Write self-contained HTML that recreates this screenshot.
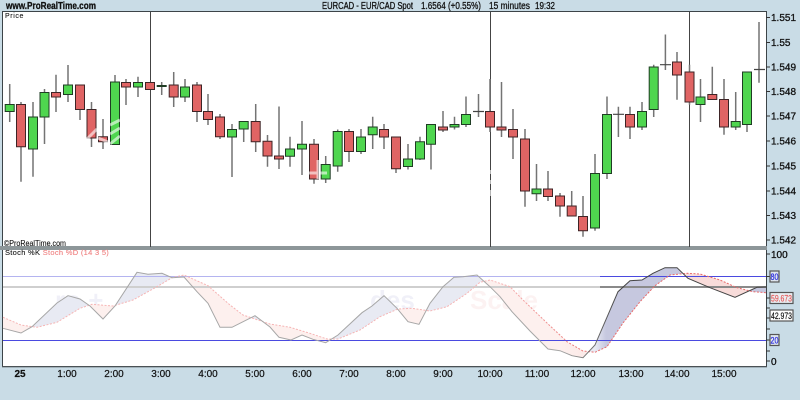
<!DOCTYPE html>
<html>
<head>
<meta charset="utf-8">
<title>EURCAD</title>
<style>
html,body{margin:0;padding:0;background:#c9dce6;overflow:hidden}
svg{display:block;filter:blur(.3px)}
text{font-family:"Liberation Sans",sans-serif;fill:#111;stroke:#111;stroke-width:.3}
.a{font-size:10px;font-weight:bold}
.t{font-size:10px;text-anchor:middle;stroke-width:.2}
</style>
</head>
<body>
<svg width="800" height="400" viewBox="0 0 800 400" xmlns="http://www.w3.org/2000/svg">
<defs>
<linearGradient id="gb" gradientUnits="userSpaceOnUse" x1="595" y1="0" x2="606" y2="0"><stop offset="0" stop-color="#e8eaf3"/><stop offset="1" stop-color="#c6c8df"/></linearGradient>
<linearGradient id="gp" gradientUnits="userSpaceOnUse" x1="560" y1="0" x2="640" y2="0"><stop offset="0" stop-color="#fdf0ee"/><stop offset="1" stop-color="#f8dcda"/></linearGradient>
<linearGradient id="gk" gradientUnits="userSpaceOnUse" x1="560" y1="0" x2="620" y2="0"><stop offset="0" stop-color="#a6a6a6"/><stop offset="1" stop-color="#444"/></linearGradient>
<linearGradient id="gd" gradientUnits="userSpaceOnUse" x1="500" y1="0" x2="600" y2="0"><stop offset="0" stop-color="#f6b4b4"/><stop offset="1" stop-color="#e86a6a"/></linearGradient>
<clipPath id="aboveD"><path d="M3 250V317.3L21 325 37 327.3 57 322.3 80 308.3 92 304.3 113 306 133 300 157 286.7 172 277.7 184 275 208 285.7 230 305 243 315 270 324 290 327.3 310 333.3 327 339 338 339 360 330 380 316.7 398 309 412 308.3 430 311 447 306.7 467 293.3 480 282.3 490 280 510 286.7 523 300 530 306.7 547 323 567 341.7 583 351 595 352.3 607 346.7 623 323 640 301.7 655 285.7 670 275 687 273.3 700 274 720 280 737 287.7 753 291.7 766 292.7V250z"/></clipPath>
<clipPath id="aboveK"><path d="M3 250V328.3L21 333 32 326.7 57 303 68 295.7 80 299 90 306 103 319 115 306 137 272.3 148 274.3 162 273.3 172 277.7 184 277 197 291.7 208 303.3 220 327.3 232 327.3 255 315.7 270 327 279 337.3 291 340 302 335 313 339.3 325.7 342.7 338 335 362 312.7 372 306 384 295.7 397 308.3 408 321.7 419 324.3 430 303.3 443 286.7 454 277.3 463 276.7 477 275 490 286.7 500 296.7 512 311.7 530 331 548 349 560 350.7 572 355.7 583 357.7 595 345 618 291.7 630 280.7 642 280 653 273.3 665 267.7 677 267.7 688 278.3 710 287.7 735 297.3 757 287.3 766 287V250z"/></clipPath>
</defs>

<rect width="800" height="400" fill="#c9dce6"/>
<rect x="2" y="11" width="764.5" height="356" fill="#fff"/>
<path d="M2.5 367V11.5H766.5V367" fill="none" stroke="#3c4448" stroke-width="1"/>
<rect x="0" y="246" width="767" height="4" fill="#8d9699"/>
<rect x="2" y="366" width="765" height="1.3" fill="#4a5155"/>

<!-- vertical separators -->
<path d="M150.5 12V247M490.5 12V247M689.5 12V247" stroke="#444" stroke-width="1" fill="none"/>

<!-- wicks -->
<path d="M9.7 84V122M21 102V181.7M33 102V176.7M44.5 89V144M56 74.7V112M68 65V102M80 85V120M91.500 102V147M103 119V149M115 75V144.5M126 79V105M138 76.7V97M150 82V90M161.7 82V95M173.7 72V107M185 79V102M197 82V122M208 94V125M220 114V139M232 124V177M243.7 122V142M255.7 104V152M267.5 135V166.7M279 106.5V169M290 136.7V166.7M302 121V175M314 139V183.7M325.7 156V183M337.7 129.5V171.7M349 129V162M361 129V154M372.7 116.7V149M384 124V149M396 137V173M408 144V169.5M420 136.7V160M431 124V169.5M443 111V132M454.5 116.7V129.5M466 96.5V127M478.5 94V117M490 79V132M501.5 82V137M513 109V159M525 129V206.7M536.5 164V201M548 171V201M560 193V216.7M571.7 191V216M583 196V236.7M595 154V230.7M607 96.5V179M618.4 106.7V137M630 106.7V139M642 102V130M653.7 64.7V117M665.4 34.5V70M677 52V99.7M689.5 64.7V104.7M700.5 79V122M712.3 66.7V100M724 79V134.7M735.7 92V130M747 72V132M759 22V82.7" stroke="#747474" stroke-width="1.5" fill="none"/>
<path d="M473 111.5H484M613 114.3H624M660 64.7H671M754 69.5H765" stroke="#444" stroke-width="1.2" fill="none"/>

<!-- green bodies -->
<path d="M5.2 104.5h9V111.5h-9zM28.5 117h9V149h-9zM40 92.5h9V117h-9zM63.5 85h9V94.5h-9zM110.5 82h9V144.5h-9zM133.5 82.5h9V87h-9zM157.2 85.5h9V86.5h-9zM180.5 87h9V97h-9zM227.5 129.5h9V137h-9zM239.2 121.5h9V129h-9zM285.5 149h9V156.3h-9zM297.5 144.3h9V149h-9zM321.2 164.5h9V179h-9zM333.2 131.5h9V166h-9zM356.5 137h9V151.5h-9zM368.2 127h9V134.7h-9zM403.5 159h9V166.5h-9zM415.5 141.7h9V159h-9zM426.5 124.5h9V144.3h-9zM450 124.5h9V127h-9zM461.5 114.5h9V124.5h-9zM532 189h9V193.7h-9zM590.5 173.5h9V228h-9zM602.5 114.5h9V173.5h-9zM637.5 111.5h9V127h-9zM649.2 67h9V109.5h-9zM696 97h9V104.5h-9zM731.2 121.5h9V127h-9zM742.5 72h9V124.5h-9z" fill="#4fd64f" stroke="#1f3d24" stroke-width="1"/>
<!-- red bodies -->
<path d="M16.5 104.5h9V146.7h-9zM51.5 92.5h9V97h-9zM75.5 85h9V109.5h-9zM87 109.5h9V138h-9zM98.5 136.7h9V141.7h-9zM121.5 82.5h9V87h-9zM145.5 82.5h9V89.5h-9zM169.2 85h9V97h-9zM192.5 85h9V111.5h-9zM203.5 111.5h9V119.5h-9zM215.5 117h9V136.7h-9zM251.2 121.5h9V141.7h-9zM263 141.3h9V156h-9zM274.5 156h9V159h-9zM309.5 144.3h9V179h-9zM344.5 131.5h9V151.5h-9zM379.5 129.5h9V137h-9zM391.5 137h9V168.7h-9zM438.5 127h9V130h-9zM485.5 111.5h9V127h-9zM497 127h9V130h-9zM508.5 129.5h9V137h-9zM520.5 139h9V191h-9zM543.5 189h9V196.5h-9zM555.5 196h9V206h-9zM567.2 206h9V216h-9zM578.5 216.5h9V230.7h-9zM625.5 114.5h9V127h-9zM672.5 62h9V75h-9zM685 72h9V102h-9zM707.8 94.5h9V99.5h-9zM719.5 99.5h9V127h-9z" fill="#e06464" stroke="#3e2426" stroke-width="1"/>

<!-- watermark over candles -->
<g stroke="#fff" stroke-opacity=".6" fill="none">
<path d="M87 139L97 129M98 138L108 142M110 125L120 120M110 134L120 128M110 144L120 136" stroke-width="3"/>
<path d="M309 173H327M318 160V179" stroke-width="3"/>
<path d="M490.5 170V174M490.5 180V184M490.5 190V196" stroke-width="1.5"/>
</g>

<text x="5" y="18" style="font-size:7px;stroke-width:.1;letter-spacing:.6px">Price</text>
<text x="4" y="246" style="font-size:8px;stroke-width:.1" textLength="62" lengthAdjust="spacingAndGlyphs">©ProRealTime.com</text>

<!-- header -->
<text x="6" y="9" class="a" textLength="90" lengthAdjust="spacingAndGlyphs">www.ProRealTime.com</text>
<text x="322" y="9" class="a" style="font-weight:normal" textLength="91" lengthAdjust="spacingAndGlyphs">EURCAD - EUR/CAD Spot</text>
<text x="421" y="9" class="a" style="font-weight:normal" textLength="60" lengthAdjust="spacingAndGlyphs">1.6564 (+0.55%)</text>
<text x="489" y="9" class="a" style="font-weight:normal" textLength="41" lengthAdjust="spacingAndGlyphs">15 minutes</text>
<text x="535" y="9" class="a" style="font-weight:normal" textLength="20" lengthAdjust="spacingAndGlyphs">19:32</text>

<!-- price axis -->
<path d="M766 17.5h4M766 42.5h4M766 67h4M766 91.5h4M766 116h4M766 141h4M766 166h4M766 191h4M766 215.5h4M766 240h4M766 254h4M766 276.5h4M766 298h4M766 308h4M766 318h4M766 329h4M766 340h4M766 351h4M766 361h4" stroke="#333" stroke-width="1"/>
<g style="font-size:10px">
<text x="771" y="21">1.551</text>
<text x="771" y="46">1.55</text>
<text x="771" y="70.5">1.549</text>
<text x="771" y="95">1.548</text>
<text x="771" y="119.5">1.547</text>
<text x="771" y="144.5">1.546</text>
<text x="771" y="169.5">1.545</text>
<text x="771" y="194.5">1.544</text>
<text x="771" y="219">1.543</text>
<text x="771" y="243.5">1.542</text>
<text x="771" y="258">100</text>
<text x="771" y="365">0</text>
</g>

<!-- stochastic -->
<text x="5" y="255" style="font-size:7.5px;stroke-width:.1;letter-spacing:.3px">Stoch %K <tspan style="fill:#ef7f7f;stroke:#ef7f7f">Stoch %D (14 3 5)</tspan></text>

<!-- faint watermark -->
<g style="font-size:26px" opacity=".07">
<text x="55" y="309" style="fill:#3a42a8;stroke:none;font-weight:bold">ro +</text>
<text x="370" y="309" style="fill:#3a42a8;stroke:none;font-weight:bold">des</text>
<text x="470" y="309" style="fill:#e05050;stroke:none;font-weight:bold">Scale</text>
</g>

<!-- fills between K and D -->
<path d="M3 328.3L21 333 32 326.7 57 303 68 295.7 80 299 90 306 103 319 115 306 137 272.3 148 274.3 162 273.3 172 277.7 184 277 197 291.7 208 303.3 220 327.3 232 327.3 255 315.7 270 327 279 337.3 291 340 302 335 313 339.3 325.7 342.7 338 335 362 312.7 372 306 384 295.7 397 308.3 408 321.7 419 324.3 430 303.3 443 286.7 454 277.3 463 276.7 477 275 490 286.7 500 296.7 512 311.7 530 331 548 349 560 350.7 572 355.7 583 357.7 595 345 618 291.7 630 280.7 642 280 653 273.3 665 267.7 677 267.7 688 278.3 710 287.7 735 297.3 757 287.3 766 287V366H3z" fill="url(#gb)" clip-path="url(#aboveD)"/>
<path d="M3 317.3L21 325 37 327.3 57 322.3 80 308.3 92 304.3 113 306 133 300 157 286.7 172 277.7 184 275 208 285.7 230 305 243 315 270 324 290 327.3 310 333.3 327 339 338 339 360 330 380 316.7 398 309 412 308.3 430 311 447 306.7 467 293.3 480 282.3 490 280 510 286.7 523 300 530 306.7 547 323 567 341.7 583 351 595 352.3 607 346.7 623 323 640 301.7 655 285.7 670 275 687 273.3 700 274 720 280 737 287.7 753 291.7 766 292.7V366H3z" fill="url(#gp)" clip-path="url(#aboveK)"/>

<!-- reference levels -->
<rect x="3" y="276" width="597" height="1" fill="#b4b4f0"/>
<rect x="600" y="276" width="166" height="1" fill="#4a4ae0"/>
<rect x="3" y="286" width="597" height="2" fill="#cfcfcf"/>
<rect x="600" y="286" width="166" height="2" fill="#8a8a8a"/>
<rect x="3" y="340" width="763" height="1" fill="#4a4ae0"/>

<path d="M3 317.3L21 325 37 327.3 57 322.3 80 308.3 92 304.3 113 306 133 300 157 286.7 172 277.7 184 275 208 285.7 230 305 243 315 270 324 290 327.3 310 333.3 327 339 338 339 360 330 380 316.7 398 309 412 308.3 430 311 447 306.7 467 293.3 480 282.3 490 280 510 286.7 523 300 530 306.7 547 323 567 341.7 583 351 595 352.3 607 346.7 623 323 640 301.7 655 285.7 670 275 687 273.3 700 274 720 280 737 287.7 753 291.7 766 292.7" fill="none" stroke="url(#gd)" stroke-width="1" stroke-dasharray="2 1.5"/>
<path d="M3 328.3L21 333 32 326.7 57 303 68 295.7 80 299 90 306 103 319 115 306 137 272.3 148 274.3 162 273.3 172 277.7 184 277 197 291.7 208 303.3 220 327.3 232 327.3 255 315.7 270 327 279 337.3 291 340 302 335 313 339.3 325.7 342.7 338 335 362 312.7 372 306 384 295.7 397 308.3 408 321.7 419 324.3 430 303.3 443 286.7 454 277.3 463 276.7 477 275 490 286.7 500 296.7 512 311.7 530 331 548 349 560 350.7 572 355.7 583 357.7 595 345 618 291.7 630 280.7 642 280 653 273.3 665 267.7 677 267.7 688 278.3 710 287.7 735 297.3 757 287.3 766 287" fill="none" stroke="url(#gk)" stroke-width="1"/>

<!-- boxed labels -->
<rect x="770" y="271" width="9" height="11" fill="#dfe6ee" stroke="#555" stroke-width="1.2"/>
<text x="770.5" y="280" style="font-size:9.5px;fill:#2a2ae0;stroke:#2a2ae0;stroke-width:.2" textLength="8" lengthAdjust="spacingAndGlyphs">80</text>
<rect x="770" y="292.5" width="23" height="11" fill="#e8eef2" stroke="#555" stroke-width="1.2"/>
<text x="771" y="301.5" style="font-size:9.5px;fill:#e65a5a;stroke:#e65a5a;stroke-width:.2" textLength="21" lengthAdjust="spacingAndGlyphs">59.673</text>
<rect x="770" y="310" width="23" height="11" fill="#fff" stroke="#555" stroke-width="1.2"/>
<text x="771" y="319" style="font-size:9.5px;stroke-width:.2" textLength="21" lengthAdjust="spacingAndGlyphs">42.973</text>
<rect x="770" y="334.5" width="9" height="11" fill="#dfe6ee" stroke="#555" stroke-width="1.2"/>
<text x="770.5" y="343.5" style="font-size:9.5px;fill:#2a2ae0;stroke:#2a2ae0;stroke-width:.2" textLength="8" lengthAdjust="spacingAndGlyphs">20</text>

<!-- time axis -->
<text class="t" x="20" y="377" style="font-weight:bold">25</text>
<text class="t" x="67" y="377">1:00</text>
<text class="t" x="114" y="377">2:00</text>
<text class="t" x="161" y="377">3:00</text>
<text class="t" x="208" y="377">4:00</text>
<text class="t" x="255" y="377">5:00</text>
<text class="t" x="302" y="377">6:00</text>
<text class="t" x="349" y="377">7:00</text>
<text class="t" x="396" y="377">8:00</text>
<text class="t" x="443" y="377">9:00</text>
<text class="t" x="490" y="377">10:00</text>
<text class="t" x="537" y="377">11:00</text>
<text class="t" x="583" y="377">12:00</text>
<text class="t" x="631" y="377">13:00</text>
<text class="t" x="677" y="377">14:00</text>
<text class="t" x="724" y="377">15:00</text>
</svg>
</body>
</html>
